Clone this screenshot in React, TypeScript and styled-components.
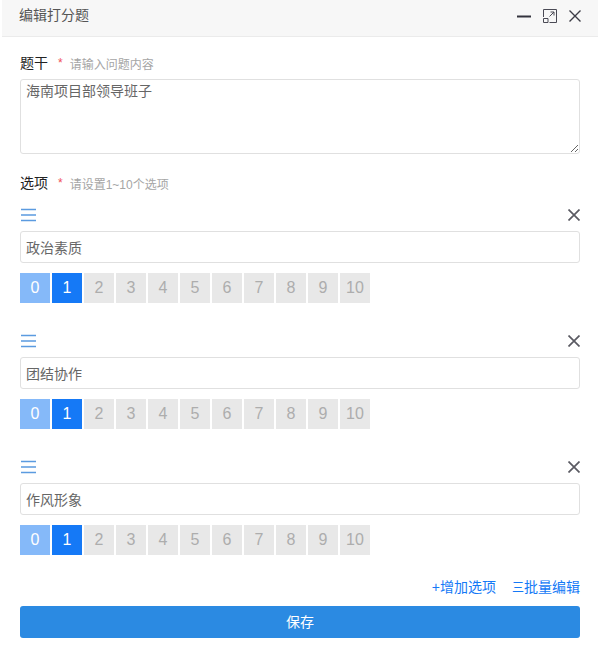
import React from "react";
import styled, { createGlobalStyle } from "styled-components";

const Global = createGlobalStyle`
  html, body { margin: 0; padding: 0; background: #fff; }
  body { font-family: "Liberation Sans", "Noto Sans CJK SC", sans-serif; }
`;

const Page = styled.div`
  width: 600px;
  height: 649px;
  overflow: hidden;
  background: #fff;
`;

const Header = styled.header`
  margin: 0 2px;
  height: 37px;
  box-sizing: border-box;
  background: #f7f7f7;
  border-bottom: 1px solid #ebebeb;
  padding: 0 17px 6px 17px;
  display: flex;
  align-items: center;
  justify-content: space-between;
`;

const Title = styled.h1`
  margin: 0;
  font-size: 14px;
  font-weight: 400;
  line-height: 20px;
  color: #555;
`;

const HeaderIcons = styled.div`
  display: flex;
  align-items: center;
  gap: 12px;
  padding-top: 2px;
`;

const Body = styled.main`
  padding: 16px 20px 0;
`;

const FieldLabel = styled.div<{ $top?: number }>`
  display: flex;
  align-items: center;
  height: 20px;
  margin-top: ${(p) => p.$top ?? 0}px;
`;

const LabelText = styled.span`
  font-size: 14px;
  line-height: 18px;
  color: #222;
`;

const Star = styled.span`
  margin-left: 10px;
  font-size: 12px;
  color: #f0505a;
`;

const Hint = styled.span`
  margin-left: 7px;
  font-size: 12px;
  color: #a5a5a5;
`;

const Question = styled.textarea`
  display: block;
  width: 100%;
  height: 75px;
  margin-top: 6px;
  box-sizing: border-box;
  border: 1px solid #e0e0e0;
  border-radius: 3px;
  padding: 1px 5px;
  font: 14px/20px "Liberation Sans", "Noto Sans CJK SC", sans-serif;
  color: #666;
  outline: none;
`;

const OptionBlock = styled.section<{ $top: number }>`
  margin-top: ${(p) => p.$top}px;
`;

const OptionTop = styled.div`
  height: 20px;
  display: flex;
  align-items: center;
  justify-content: space-between;
  padding-left: 1px;
`;

const OptionInput = styled.input`
  display: block;
  width: 100%;
  height: 32px;
  margin-top: 6px;
  box-sizing: border-box;
  border: 1px solid #e0e0e0;
  border-radius: 3px;
  padding: 0 5px;
  font: 14px "Liberation Sans", "Noto Sans CJK SC", sans-serif;
  color: #666;
  outline: none;
`;

const Scores = styled.div`
  display: flex;
  gap: 2px;
  margin-top: 10px;
`;

const Score = styled.div<{ $tone: "low" | "on" | "off" }>`
  width: 30px;
  height: 30px;
  display: flex;
  align-items: center;
  justify-content: center;
  font-size: 16px;
  background: ${(p) => (p.$tone === "low" ? "#85b9f9" : p.$tone === "on" ? "#1579f6" : "#e8e8e8")};
  color: ${(p) => (p.$tone === "off" ? "#adadad" : "#fff")};
`;

const Actions = styled.div`
  display: flex;
  justify-content: flex-end;
  gap: 16px;
  margin-top: 21px;
  height: 20px;
  align-items: center;
`;

const ActionLink = styled.a`
  font-size: 14px;
  color: #1579f6;
`;

const ListGlyph = styled.span`
  font-size: 12px;
`;

const SaveButton = styled.button`
  display: block;
  width: 100%;
  height: 32px;
  margin-top: 10px;
  border: 0;
  border-radius: 3px;
  padding: 0 0 2px;
  background: #2b8ae2;
  color: #fff;
  font: 14px "Liberation Sans", "Noto Sans CJK SC", sans-serif;
`;

const Minimize = () => (
  <svg width="14" height="14" viewBox="0 0 14 14"><path d="M0 7.5h14" stroke="#33333d" strokeWidth="2" /></svg>
);
const Expand = () => (
  <svg width="14" height="14" viewBox="0 0 14 14" fill="none" stroke="#4a4a55" strokeWidth="1">
    <path d="M.5 8V.5h13v13H6.5" />
    <path d="M.5 9.5h4.500v4h-4.500z" />
    <path d="M6.500 7.500l4.500-4.500M7.500 3h3.500v3.500" />
  </svg>
);
const Cross = ({ size, color, width }: { size: number; color: string; width: number }) => (
  <svg width={size} height={size} viewBox="0 0 12 12" fill="none" stroke={color} strokeWidth={width}>
    <path d="M.5.5l11 11M11.500.5l-11 11" />
  </svg>
);
const Handle = () => (
  <svg width="15" height="14" viewBox="0 0 15 14" stroke="#5b9be0" strokeWidth="1.3">
    <path d="M0 1.500h15M0 7h15M0 12.500h15" />
  </svg>
);

const options = ["政治素质", "团结协作", "作风形象"];
const scores = [0, 1, 2, 3, 4, 5, 6, 7, 8, 9, 10];

export default function App() {
  return (
    <Page>
      <Global />
      <Header>
        <Title>编辑打分题</Title>
        <HeaderIcons>
          <Minimize />
          <Expand />
          <Cross size={12} color="#3c3c46" width={1.4} />
        </HeaderIcons>
      </Header>
      <Body>
        <FieldLabel>
          <LabelText>题干</LabelText>
          <Star>*</Star>
          <Hint>请输入问题内容</Hint>
        </FieldLabel>
        <Question defaultValue="海南项目部领导班子" />
        <FieldLabel $top={19}>
          <LabelText>选项</LabelText>
          <Star>*</Star>
          <Hint>请设置1~10个选项</Hint>
        </FieldLabel>
        {options.map((name, i) => (
          <OptionBlock key={name} $top={i === 0 ? 12 : 28}>
            <OptionTop>
              <Handle />
              <Cross size={12} color="#5a5a62" width={1.7} />
            </OptionTop>
            <OptionInput defaultValue={name} />
            <Scores>
              {scores.map((n) => (
                <Score key={n} $tone={n === 0 ? "low" : n === 1 ? "on" : "off"}>
                  {n}
                </Score>
              ))}
            </Scores>
          </OptionBlock>
        ))}
        <Actions>
          <ActionLink>+增加选项</ActionLink>
          <ActionLink><ListGlyph>三</ListGlyph>批量编辑</ActionLink>
        </Actions>
        <SaveButton>保存</SaveButton>
      </Body>
    </Page>
  );
}
